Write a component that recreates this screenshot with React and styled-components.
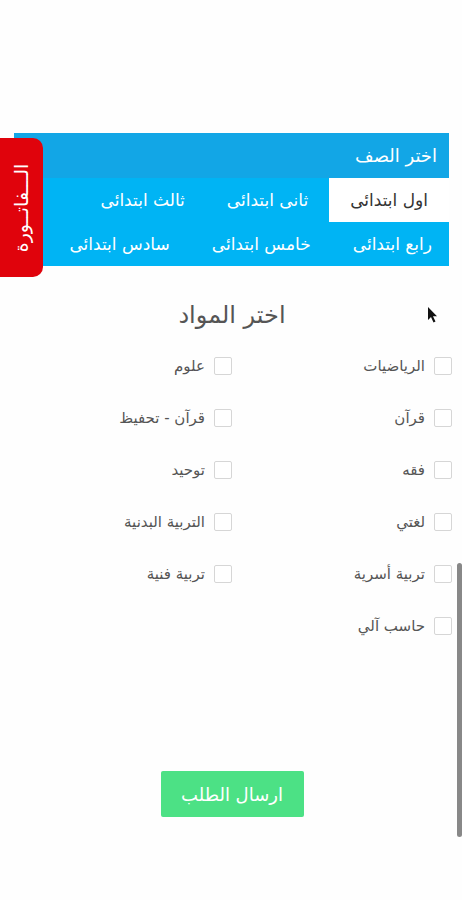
import React from "react";
import styled, { createGlobalStyle } from "styled-components";

const grades = [
  ["اول ابتدائى", "ثانى ابتدائى", "ثالث ابتدائى"],
  ["رابع ابتدائى", "خامس ابتدائى", "سادس ابتدائى"],
];

const subjects = [
  "الرياضيات",
  "علوم",
  "قرآن",
  "قرآن - تحفيظ",
  "فقه",
  "توحيد",
  "لغتي",
  "التربية البدنية",
  "تربية أسرية",
  "تربية فنية",
  "حاسب آلي",
];

export default function App() {
  return (
    <Page>
      <GlobalStyle />
      <Panel>
        <PanelHeader>اختر الصف</PanelHeader>
        <Options>
          {grades.map((row, i) => (
            <OptionRow key={i}>
              {row.map((g, j) => (
                <Option key={g} active={i === 0 && j === 0}>
                  {g}
                </Option>
              ))}
            </OptionRow>
          ))}
        </Options>
      </Panel>

      <InvoiceTab>
        <span>الـــفاتــورة</span>
      </InvoiceTab>

      <Title>اختر المواد</Title>
      <SubjectGrid>
        {subjects.map((s) => (
          <Subject key={s}>
            <Box />
            <span>{s}</span>
          </Subject>
        ))}
      </SubjectGrid>

      <ButtonRow>
        <SendButton>ارسال الطلب</SendButton>
      </ButtonRow>

      <Pointer width="12" height="18" viewBox="0 0 12 18">
        <path d="M1 1 L1 14 L4 11 L6.5 16.5 L8.5 15.5 L6 10.2 L10 10.2 Z" fill="#111" />
      </Pointer>
      <ScrollThumb />
    </Page>
  );
}

//styles
const GlobalStyle = createGlobalStyle`
  html, body {
    margin: 0;
    padding: 0;
    background: #fefefe;
  }
  body {
    font-family: "DejaVu Sans", "Noto Sans", sans-serif;
  }
`;

const Page = styled.div`
  position: relative;
  min-height: 900px;
  padding-top: 133px;
  box-sizing: border-box;
  direction: rtl;
`;

const Panel = styled.div`
  margin: 0 13px 0 14px;
`;

const PanelHeader = styled.div`
  height: 45px;
  line-height: 45px;
  padding: 0 12px;
  background: #12a6e6;
  color: #fff;
  font-size: 18px;
`;

const Options = styled.div`
  background: #00b4f4;
`;

const OptionRow = styled.div`
  display: flex;
  height: 44px;
`;

const Option = styled.div`
  padding: 0 21px;
  line-height: 44px;
  font-size: 17px;
  color: ${(p) => (p.active ? "#333" : "#fff")};
  background: ${(p) => (p.active ? "#fff" : "transparent")};
  white-space: nowrap;
  &:first-child {
    padding-right: ${(p) => (p.active ? "21px" : "17px")};
  }
`;

const InvoiceTab = styled.div`
  position: absolute;
  left: 0;
  top: 138px;
  width: 43px;
  height: 139px;
  background: #e0030c;
  border-radius: 0 10px 10px 0;
  display: flex;
  align-items: center;
  justify-content: center;
  color: #fff;
  font-size: 19px;
  > span {
    transform: rotate(-90deg);
    white-space: nowrap;
  }
`;

const Title = styled.h2`
  margin: 32px 0 0;
  height: 34px;
  line-height: 34px;
  text-align: center;
  font-weight: normal;
  font-size: 24px;
  color: #555;
  padding-left: 2px;
`;

const SubjectGrid = styled.div`
  margin: 8px 10px 0 12px;
  display: grid;
  grid-template-columns: 220px 220px;
  grid-auto-rows: 52px;
`;

const Subject = styled.label`
  display: flex;
  align-items: center;
  gap: 9px;
  font-size: 15px;
  color: #555;
`;

const Box = styled.span`
  width: 16px;
  height: 16px;
  border: 1px solid #d6d6d6;
  border-radius: 2px;
  background: #fff;
  flex: none;
`;

const ButtonRow = styled.div`
  display: flex;
  justify-content: center;
  margin: 119px 10px 0 12px;
`;

const SendButton = styled.button`
  width: 143px;
  height: 46px;
  border: none;
  border-radius: 2px;
  background: #4ce185;
  color: #fff;
  font-family: inherit;
  font-size: 18px;
`;

const Pointer = styled.svg`
  position: absolute;
  left: 427px;
  top: 306px;
`;

const ScrollThumb = styled.div`
  position: absolute;
  right: 0;
  top: 563px;
  width: 5px;
  height: 274px;
  border-radius: 3px;
  background: #888;
`;
